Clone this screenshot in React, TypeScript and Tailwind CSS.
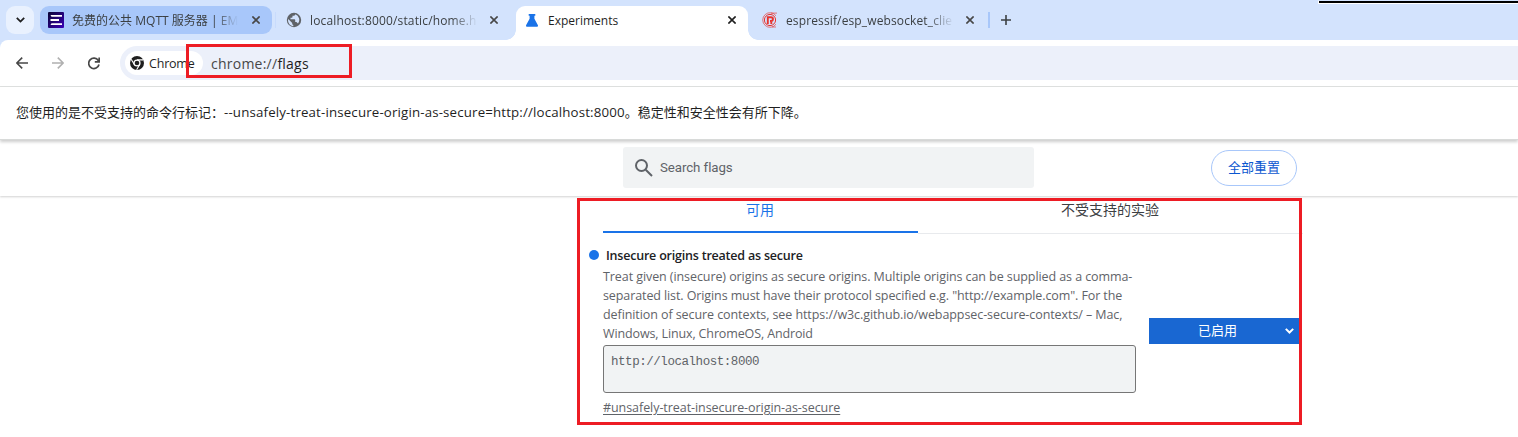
import React from "react";

function Close({ dark = false }: { dark?: boolean }) {
  return (
    <svg className="size-2 shrink-0" viewBox="0 0 8 8" fill="none" stroke={dark ? "#1f1f1f" : "#474747"} strokeWidth="1.6">
      <path d="M.4.4 7.6 7.6M7.6.4.4 7.6" />
    </svg>
  );
}

function EmqxIcon() {
  return (
    <svg className="size-4 shrink-0" viewBox="0 0 16 16">
      <defs>
        <linearGradient id="emqx" x1="0" y1="0" x2="1" y2="1">
          <stop offset="0" stopColor="#0a0533" />
          <stop offset="1" stopColor="#3a00b8" />
        </linearGradient>
      </defs>
      <rect width="16" height="16" rx="1" fill="url(#emqx)" />
      <path d="M2.500 3H14v1.800H3.500zM2.500 7.100H11v1.800H2.500zM3.500 11.200H14V13H2.500z" fill="#fff" />
    </svg>
  );
}

function GlobeIcon() {
  return (
    <svg className="size-4 shrink-0" viewBox="0 0 16 16">
      <circle cx="8" cy="8" r="7.2" fill="#5f6368" />
      <path d="M2.200 7 6.200 11v.8c0 .7.5 1.200 1.100 1.200v1.200C4.200 13.800 2 11.200 2 8zM9.300 2.300c0 .8-.6 1.400-1.300 1.400H6.500v1.400c0 .4-.3.7-.7.7H4.500v1.400h4c.4 0 .7.3.7.7v2h.8c.6 0 1.200.4 1.400 1l.6.600a5.900 5.900 0 0 0-2.700-9.200z" fill="#d3e3fd" />
    </svg>
  );
}

function FlaskIcon() {
  return (
    <svg className="h-[13px] w-3 shrink-0" viewBox="0 0 12 13" fill="#1a73e8">
      <path d="M2.700 0h6.600v1.700H8.400v3L11.800 11c.5 1-.1 1.700-1 1.700H1.200c-.9 0-1.500-.7-1-1.700L3.600 4.700v-3h-.9z" />
    </svg>
  );
}

function RegistryIcon() {
  return (
    <svg className="size-4 shrink-0" viewBox="0 0 16 16" fill="none" stroke="#e8342f">
      <path d="M14 3.800A7.300 7.300 0 1 0 14 12.200" strokeWidth=".8" opacity=".8" />
      <path d="M9 1.100h6M10 15h4" strokeWidth=".8" opacity=".8" />
      <circle cx="8" cy="8" r="5.600" strokeWidth="1" />
      <path d="M5.800 12V5.200h3.200c2.600 0 2.600 3.800 0 3.800H8M9.300 9v3" strokeWidth="1.900" />
    </svg>
  );
}

function ChromeIcon() {
  return (
    <svg className="size-[14px] shrink-0" viewBox="0 0 14 14">
      <circle cx="7" cy="7" r="7" fill="#1f1f1f" />
      <path d="M7 3.900h6.200M4.300 8.500 1.200 3.200M9.700 8.500l-3.100 5.300" stroke="#fff" strokeWidth="1.100" />
      <circle cx="7" cy="7" r="3.600" fill="#fff" />
      <circle cx="7" cy="7" r="2.300" fill="#1f1f1f" />
    </svg>
  );
}

function TabStrip() {
  return (
    <div className="flex h-10 items-start bg-[#d3e3fd] pt-1.5 pl-1.5 text-[12px] leading-7 text-[#3c4043]">
      <div className="flex size-7 items-center justify-center rounded-[9px] bg-[#e9f1fe]">
        <svg className="h-[6px] w-[9px]" viewBox="0 0 9 6" fill="none" stroke="#1f1f1f" strokeWidth="1.800">
          <path d="m.8.900 3.700 3.700L8.200.900" />
        </svg>
      </div>
      <div className="ml-1.5 flex h-7 w-[232px] items-center rounded-[9px] bg-[#a8c7fa] pl-2">
        <EmqxIcon />
        <div className="ml-2 w-[166px] pt-px whitespace-nowrap [mask-image:linear-gradient(to_right,#000_86%,transparent)]">
          <span className="tracking-[0.02px]">免费的公共 MQTT 服务器 | EM</span>
        </div>
        <span className="ml-[14px] flex"><Close /></span>
      </div>
      <div className="mt-[6px] ml-[3px] h-4 w-px bg-[#c8dbfc]" />
      <div className="ml-[10px] flex h-7 w-[212px] items-center">
        <GlobeIcon />
        <div className="ml-2 w-[168px] pt-px whitespace-nowrap [mask-image:linear-gradient(to_right,#000_84%,transparent)]">
          <span className="tracking-[0.15px]">localhost:8000/static/home.h</span>
        </div>
        <span className="ml-[12px] flex"><Close /></span>
      </div>
      <div className="relative ml-[18px] h-[34px] w-[232px] rounded-t-[9px] bg-white text-[#1f1f1f]">
        <div className="absolute bottom-0 -left-[10px] size-[10px] bg-[radial-gradient(circle_at_0_0,#d3e3fd_9.5px,#fff_10px)]" />
        <div className="absolute -right-[10px] bottom-0 size-[10px] bg-[radial-gradient(circle_at_100%_0,#d3e3fd_9.5px,#fff_10px)]" />
        <div className="flex h-7 items-center pl-[10px]">
          <FlaskIcon />
          <span className="ml-[10px] w-[166px] pt-px">Experiments</span>
          <span className="ml-[14px] flex"><Close dark /></span>
        </div>
      </div>
      <div className="ml-[14px] flex h-7 w-[212px] items-center">
        <RegistryIcon />
        <div className="ml-2 w-[168px] pt-px whitespace-nowrap [mask-image:linear-gradient(to_right,#000_84%,transparent)]">
          <span className="tracking-[0.13px]">espressif/esp_websocket_clie</span>
        </div>
        <span className="ml-[12px] flex"><Close /></span>
      </div>
      <div className="mt-[6px] ml-[14px] h-4 w-[2px] bg-[#a8c7fa]" />
      <svg className="mt-[9px] ml-[11px] size-[10px]" viewBox="0 0 10 10" stroke="#3c4043" strokeWidth="1.600">
        <path d="M5 0v10M0 5h10" />
      </svg>
    </div>
  );
}

function Toolbar() {
  return (
    <div className="bg-[#d3e3fd]">
      <div className="flex h-[47px] items-start rounded-tl-lg border-b border-[#dfe1e0] bg-white pt-[6px] pl-4">
        <div className="flex h-[34px] w-[104px] items-center">
          <svg className="h-3 w-3" viewBox="0 0 12 12" fill="none" stroke="#474747" strokeWidth="1.600">
            <path d="M12 6H1M6.200.6.800 6l5.400 5.400" />
          </svg>
          <svg className="ml-6 h-3 w-3" viewBox="0 0 12 12" fill="none" stroke="#b0b0b0" strokeWidth="1.600">
            <path d="M0 6h11M5.800.6 11.200 6l-5.400 5.400" />
          </svg>
          <svg className="ml-6 h-[13px] w-3" viewBox="0 0 12 13" fill="none" stroke="#474747" strokeWidth="1.700">
            <path d="M11 7.500A5.200 5.200 0 1 1 10.300 3.600L11 4.600M11.200.4v4.500H6.800" />
          </svg>
        </div>
        <div className="flex h-[34px] flex-1 items-center rounded-l-full bg-[#ecf0fa] pl-[5px]">
          <div className="flex h-6 w-[78px] items-center rounded-full bg-white pl-[5px] text-[12.5px] tracking-[-0.2px] text-[#1f1f1f]">
            <ChromeIcon />
            <span className="ml-[5px] pt-[2px]">Chrome</span>
          </div>
          <span className="ml-2 text-[14px] tracking-[0.24px] text-[#474747]">
            chrome://<span className="text-[#1f1f1f]">flags</span>
          </span>
        </div>
      </div>
    </div>
  );
}

export default function App() {
  return (
    <div className="relative h-[437px] w-[1518px] overflow-hidden bg-white font-['Open_Sans','Noto_Sans_CJK_SC',sans-serif]">
      <TabStrip />
      <Toolbar />
      <div className="relative z-10 flex h-[53px] items-center border-b border-[#d8dad9] bg-white pl-4 text-[13px] whitespace-nowrap text-[#1f1f1f] shadow-[0_2px_3px_rgba(0,0,0,0.2)]">
        <span>您使用的是不受支持的命令行标记：</span>
        <span className="text-[13.3px] tracking-[0.15px]">--unsafely-treat-insecure-origin-as-secure=http://localhost:8000</span>
        <span>。稳定性和安全性会有所下降。</span>
      </div>
      <div className="flex h-14 items-start bg-white pl-[623px] shadow-[0_1px_2px_rgba(0,0,0,0.18)]">
        <div className="mt-[7px] flex h-[41px] w-[411px] items-center rounded-[3px] bg-[#f1f3f4] pl-3">
          <svg className="size-[18px]" viewBox="0 0 18 18" fill="none" stroke="#5f6368" strokeWidth="2">
            <circle cx="6.500" cy="6.500" r="5.500" />
            <path d="m10.700 10.700 6.300 6.300" />
          </svg>
          <span className="ml-[7px] font-['Roboto'] text-[13.3px] tracking-[-0.08px] text-[#5f6368]">Search flags</span>
        </div>
        <div className="mt-[10px] ml-[177px] flex h-9 w-[86px] items-center justify-center rounded-full border border-[#a8c7fa] text-[13px] text-[#0b57d0]">
          全部重置
        </div>
      </div>
      <div className="pl-[603px]">
        <div className="flex h-[38px] w-[700px] text-center text-[14px] leading-[28px]">
          <div className="h-[37px] w-[315px] border-b-2 border-[#1a73e8] pr-px text-[#1a73e8]">可用</div>
          <div className="h-[38px] flex-1 border-b border-[#e8eaed] pr-px text-[#3c4043]">不受支持的实验</div>
        </div>
        <div className="flex">
          <div className="w-[546px] pt-3">
            <div className="-ml-[14px] flex h-[19px] items-center text-[12.5px] font-semibold text-[#202124]">
              <span className="mb-px size-[10px] rounded-full bg-[#1a73e8]" />
              <span className="ml-[7px] pt-[2px] tracking-[-0.21px]">Insecure origins treated as secure</span>
            </div>
            <div className="pt-[2px] text-[12.5px] leading-[19px] tracking-[-0.08px] whitespace-nowrap text-[#5f6368]">
              <p>Treat given (insecure) origins as secure origins. Multiple origins can be supplied as a comma-</p>
              <p className="tracking-[-0.1px]">separated list. Origins must have their protocol specified e.g. "http://example.com". For the</p>
              <p className="tracking-[-0.08px]">definition of secure contexts, see https://w3c.github.io/webappsec-secure-contexts/ – Mac,</p>
              <p className="tracking-[-0.13px]">Windows, Linux, ChromeOS, Android</p>
            </div>
            <div className="mt-[2px] h-12 w-[533px] rounded-[3px] border border-[#767676] bg-[#f1f3f4] px-[7px] pt-[7px] font-['Liberation_Mono'] text-[12.5px] leading-[18px] tracking-[-0.45px] text-[#5f6368]">
              http://localhost:8000
            </div>
            <div className="mt-[5px] text-[12.5px] leading-[19px] tracking-[-0.06px] text-[#5f6368] underline underline-offset-2">
              #unsafely-treat-insecure-origin-as-secure
            </div>
          </div>
          <div className="mt-[84px] flex h-[26px] w-[151px] items-center bg-[#1967d2] text-white">
            <span className="ml-[49px] text-[13px] font-normal">已启用</span>
            <svg className="ml-auto mr-[6px] h-[6px] w-[9px]" viewBox="0 0 9 6" fill="none" stroke="#fff" strokeWidth="2">
              <path d="m.8.900 3.700 3.600L8.200.900" />
            </svg>
          </div>
        </div>
      </div>
      <div className="absolute top-[44px] left-[186px] z-20 h-[34px] w-[166px] border-3 border-[#ed1c24]" />
      <div className="absolute top-[198px] left-[577px] z-20 h-[227px] w-[725px] border-3 border-[#ed1c24]" />
      <div className="absolute top-0 right-0 z-20 h-1 w-[200px] border-y border-l border-b-white border-l-white border-t-[#d3e3fd] bg-black" />
    </div>
  );
}
